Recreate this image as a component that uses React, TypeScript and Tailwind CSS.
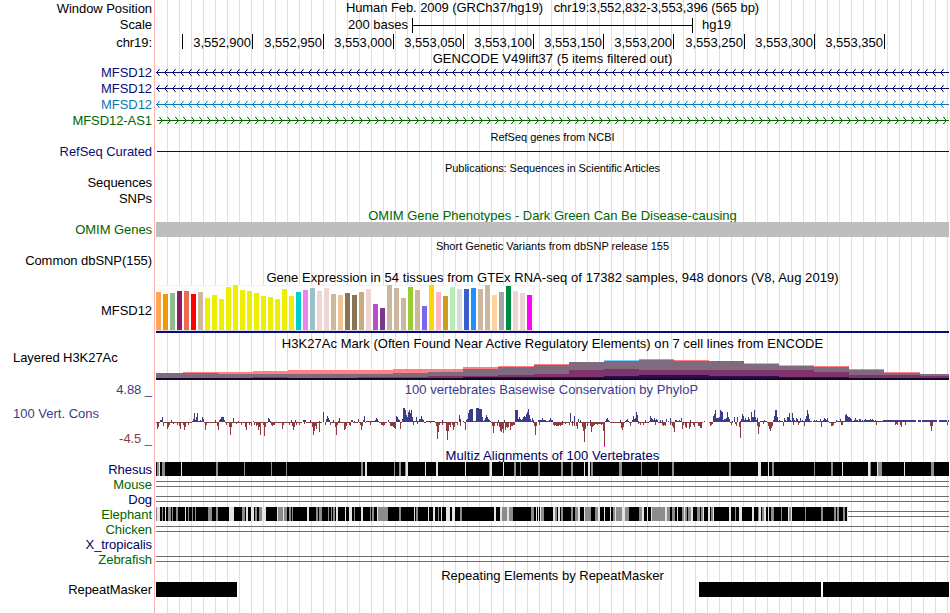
import React from "react";

const TRACK_START = 156;
const TRACK_WIDTH = 793;

type Span = [start: number, end: number];

interface RowProps {
  label?: React.ReactNode;
  labelClass?: string;
  className: string;
  children?: React.ReactNode;
}

function Row({ label, labelClass = "text-black justify-end items-center pr-0.5", className, children }: RowProps) {
  return (
    <div className={`flex ${className}`}>
      <div className={`flex w-[155px] shrink-0 border-r border-[#ffb4b4] whitespace-pre tracking-[-0.06px] ${labelClass}`}>
        {label}
      </div>
      <div className="ml-px w-[793px] shrink-0 bg-[repeating-linear-gradient(90deg,transparent_0px,transparent_11px,#dcdcf8_11px,#dcdcf8_12px)]">
        {children}
      </div>
    </div>
  );
}

function Title({ children, className = "" }: { children: React.ReactNode; className?: string }) {
  return <div className={`flex h-full items-center justify-center whitespace-pre ${className}`}>{children}</div>;
}

// Everything drawn inside a track uses genome-image x coordinates
function TrackSvg({ height, children }: { height: number; children: React.ReactNode }) {
  return (
    <svg
      className="block"
      width={TRACK_WIDTH}
      height={height}
      viewBox={`${TRACK_START} 0 ${TRACK_WIDTH} ${height}`}
      shapeRendering="crispEdges"
    >
      {children}
    </svg>
  );
}

function GeneLine({ color, strand }: { color: string; strand: "+" | "-" }) {
  const arrows: React.ReactNode[] = [];
  for (let x = 156; x < 949; x += 8) {
    const cols = strand === "-" ? [x, x + 1, x + 2, x + 3] : [x + 6, x + 5, x + 4, x + 3];
    arrows.push(
      <g key={x} fill={color}>
        <rect x={cols[0]} y={8} width={1} height={1} />
        <rect x={cols[1]} y={7} width={1} height={3} />
        <rect x={cols[2]} y={6} width={1} height={1} />
        <rect x={cols[2]} y={10} width={1} height={1} />
        <rect x={cols[3]} y={5} width={1} height={1} fillOpacity={0.7} />
        <rect x={cols[3]} y={11} width={1} height={1} fillOpacity={0.7} />
        <rect x={cols[2]} y={5} width={1} height={1} fillOpacity={0.35} />
        <rect x={cols[2]} y={11} width={1} height={1} fillOpacity={0.35} />
      </g>
    );
  }
  return (
    <TrackSvg height={16}>
      <rect x={157} y={8} width={792} height={1} fill={color} />
      {arrows}
    </TrackSvg>
  );
}

const GENES: { name: string; color: string; labelClass: string; strand: "+" | "-" }[] = [
  { name: "MFSD12", color: "#0c0c78", labelClass: "text-[#0c0c78] justify-end items-center pt-0.5 pr-0.5", strand: "-" },
  { name: "MFSD12", color: "#0c0c78", labelClass: "text-[#0c0c78] justify-end items-center pt-0.5 pr-0.5", strand: "-" },
  { name: "MFSD12", color: "#0c78b4", labelClass: "text-[#0c78b4] justify-end items-center pt-0.5 pr-0.5", strand: "-" },
  { name: "MFSD12-AS1", color: "#006400", labelClass: "text-[#006400] justify-end items-center pt-0.5 pr-0.5", strand: "+" },
];

const TICKS: [string, string][] = [
  ["", "w-[27px]"],
  ["3,552,900", "w-[70px]"],
  ["3,552,950", "w-[71px]"],
  ["3,553,000", "w-[70px]"],
  ["3,553,050", "w-[70px]"],
  ["3,553,100", "w-[70px]"],
  ["3,553,150", "w-[70px]"],
  ["3,553,200", "w-[70px]"],
  ["3,553,250", "w-[71px]"],
  ["3,553,300", "w-[70px]"],
  ["3,553,350", "w-[70px]"],
];

const GTEX_HEIGHTS = [
  38, 36, 37, 39, 39, 36, 38, 32, 35, 31, 43, 45, 40, 39, 37, 34, 33, 31, 41, 34, 38, 40, 42, 39, 42, 36, 35,
  37, 35, 38, 41, 26, 22, 45, 42, 32, 43, 40, 24, 45, 38, 34, 43, 41, 41, 42, 41, 45, 35, 38, 44, 39, 37, 35,
];

const GTEX_COLORS = [
  "#ffa54f", "#ee9a00", "#8fbc8f", "#8b1c62", "#ee6a50", "#ff0000", "#cdb79e",
  "#eeee00", "#eeee00", "#eeee00", "#eeee00", "#eeee00", "#eeee00", "#eeee00",
  "#eeee00", "#eeee00", "#eeee00", "#eeee00", "#eeee00", "#eeee00",
  "#00cdcd", "#ee82ee", "#9ac0cd", "#eed5d2", "#eed5d2", "#cdb79e", "#eec591",
  "#8b7355", "#8b7355", "#cdaa7d", "#eed5d2", "#b452cd", "#7a378b", "#cdb79e",
  "#cdb79e", "#cdb79e", "#9acd32", "#cdb79e", "#7a67ee", "#ffd700", "#ffb6c1",
  "#cd9b1d", "#b4eeb4", "#d9d9d9", "#3a5fcd", "#1e90ff", "#cdb79e", "#cdb79e",
  "#ffd39b", "#a6a6a6", "#008b45", "#eed5d2", "#eed5d2", "#ff00ff",
];

// start x, outer top, outer color, gray top, plum top, navy top (y measured in the image)
const H3K27AC: [number, number, string, number, number, number][] = [
  [156, 373, "#ff8080", 373, 378, 379],
  [183, 372, "#ff8080", 373, 378, 379],
  [218, 372, "#ff8080", 374, 378, 379],
  [253, 371, "#ff8080", 374, 377, 378],
  [288, 370, "#ff8080", 374, 378, 379],
  [358, 370, "#ff8080", 374, 377, 378],
  [393, 369, "#ff8080", 373, 377, 378],
  [428, 369, "#ff8080", 372, 376, 378],
  [463, 367, "#ff8080", 369, 376, 377],
  [498, 366, "#ff8080", 367, 375, 377],
  [534, 364, "#ff8080", 365, 374, 377],
  [569, 362, "#ff8080", 362, 370, 377],
  [604, 360, "#80ccff", 361, 369, 376],
  [639, 359, "#ff8080", 360, 370, 375],
  [674, 360, "#ff8080", 361, 370, 375],
  [709, 361, "#ff8080", 361, 370, 376],
  [744, 363, "#80ccff", 364, 370, 376],
  [779, 365, "#80ccff", 366, 370, 377],
  [814, 366, "#ff8080", 367, 372, 377],
  [849, 369, "#ff8080", 370, 375, 378],
  [884, 372, "#ff8080", 373, 375, 378],
  [920, 374, "#ff8080", 374, 376, 378],
  [949, 0, "", 0, 0, 0],
];

// PhyloP peaks as x:height
const PEAKS_UP =
  "160:2 161:2 162:5 171:2 193:3 194:9 195:2 196:5 197:9 198:1 200:2 202:5 203:3 215:2 219:2 220:3 221:5 222:5 223:5 224:2 " +
  "233:4 238:1 253:1 268:4 269:3 270:1 291:2 295:2 303:2 304:2 305:2 310:2 319:1 323:10 326:3 327:6 328:4 329:2 333:2 338:1 339:4 " +
  "351:2 352:2 354:1 358:3 363:2 364:6 367:1 368:1 372:1 373:1 374:1 375:2 376:4 377:3 378:1 388:2 396:6 397:5 398:3 399:2 " +
  "402:3 403:14 404:14 405:12 406:7 407:5 408:10 409:12 410:9 411:12 412:5 414:1 416:5 419:3 420:3 421:6 422:3 423:2 431:1 434:1 442:2 " +
  "459:7 460:3 463:1 466:2 467:3 468:9 469:12 470:13 471:13 472:13 476:14 477:14 478:14 479:13 480:13 481:13 482:5 484:2 485:4 486:7 487:5 488:3 489:2 " +
  "498:2 504:2 515:12 516:12 517:12 518:3 519:5 520:3 521:2 522:3 523:5 524:6 525:5 526:8 527:10 528:13 529:7 530:3 532:4 533:2 538:2 " +
  "539:2 540:2 541:2 542:4 543:2 544:2 545:2 547:1 549:2 550:4 551:2 552:2 562:1 570:9 572:1 574:6 578:3 580:2 590:2 606:3 607:4 608:2 " +
  "620:2 626:2 627:3 628:1 632:2 633:6 634:3 635:4 636:10 637:7 638:1 645:2 650:6 651:4 652:3 653:2 654:4 655:2 656:3 657:2 660:2 662:2 " +
  "666:3 668:1 670:4 675:2 676:2 679:2 681:4 704:1 713:6 714:8 715:12 716:4 717:4 718:4 719:5 720:12 721:11 722:10 723:2 724:3 725:3 726:4 727:10 " +
  "728:5 729:3 732:1 734:5 737:5 740:1 741:3 742:8 743:6 744:2 745:4 746:2 747:2 748:5 749:3 751:10 752:5 753:5 754:12 755:5 756:2 757:4 " +
  "763:1 764:2 765:1 773:2 774:6 775:12 776:12 777:5 779:2 781:1 784:4 785:2 787:5 788:5 789:9 790:2 792:9 793:4 794:2 796:4 797:3 800:4 802:2 " +
  "805:3 806:6 807:12 808:8 809:3 811:1 814:2 816:2 820:3 823:2 824:4 825:3 826:2 827:4 828:1 836:2 840:3 842:1 845:7 846:8 847:6 848:5 849:5 850:4 851:3 " +
  "853:1 855:4 856:2 859:3 860:3 862:2 864:2 865:3 866:2 869:2 870:3 872:3 873:2 875:2 878:1 880:1";

const PEAKS_DOWN =
  "157:7 158:5 163:4 167:7 168:5 169:3 173:2 177:3 179:4 180:7 183:3 184:8 185:5 188:3 205:8 206:3 217:4 218:8 226:3 229:5 230:13 231:5 " +
  "236:2 241:3 245:5 246:8 249:3 251:4 254:3 256:4 257:3 258:8 259:5 260:13 263:3 264:14 265:5 271:3 272:4 273:3 274:3 282:7 283:3 289:3 292:4 " +
  "293:8 294:5 296:3 299:3 304:2 312:5 313:13 314:9 315:4 316:7 319:10 325:3 330:3 335:5 336:13 337:3 344:8 345:7 346:4 349:3 350:4 " +
  "360:3 361:8 362:4 370:3 381:3 382:3 383:4 384:3 390:4 391:4 392:4 393:5 394:6 395:7 400:7 413:3 417:2 430:1 436:4 437:17 438:10 439:3 442:3 " +
  "446:9 447:18 448:9 449:3 450:5 452:3 453:8 454:5 457:3 460:4 465:8 492:4 493:11 494:4 497:4 499:5 500:9 501:10 502:7 503:11 505:8 506:5 " +
  "507:6 508:5 510:8 511:4 512:4 513:3 514:3 534:4 535:13 536:4 539:3 553:3 554:4 555:3 556:4 557:4 558:4 559:3 560:4 561:3 562:3 565:2 569:3 " +
  "572:4 574:4 576:4 577:7 582:5 583:9 584:20 585:7 587:4 590:4 591:10 592:5 593:4 594:3 595:2 596:2 597:3 598:2 599:2 600:2 601:3 602:2 603:9 604:23 " +
  "621:6 622:8 623:5 630:4 638:2 640:3 643:3 655:3 662:3 663:4 664:3 665:4 670:3 672:4 673:6 674:10 682:7 683:3 685:5 686:6 689:7 690:5 " +
  "693:3 694:5 698:4 699:4 700:6 701:6 710:4 711:3 712:2 731:3 735:2 736:4 739:5 740:16 757:4 758:12 759:5 763:2 768:4 769:7 770:9 771:6 772:4 " +
  "783:4 793:3 798:3 799:1 804:4 821:5 831:4 832:4 833:3 841:3 842:3 876:3 895:3 896:2 897:3 900:3 901:5 905:3 930:4 931:9 932:4 947:3";

// parts of the zero line with their own sign
const BASE_DOWN: Span[] = [
  [156, 160], [163, 192], [204, 218], [225, 252], [254, 268], [270, 302], [306, 322], [330, 351], [353, 358],
  [359, 363], [365, 366], [379, 387], [389, 396], [400, 402], [424, 426], [435, 458], [464, 466], [491, 515],
  [533, 537], [553, 569], [571, 574], [579, 605], [610, 625], [629, 632], [639, 649], [658, 666], [671, 675], [682, 703],
  [709, 713], [730, 733], [767, 773], [829, 836],
];
const BASE_UP: Span[] = [
  [192, 204], [366, 379], [402, 424], [426, 435], [466, 491], [515, 532], [538, 553], [605, 610], [625, 629],
  [649, 658], [676, 682], [713, 730], [740, 757], [760, 767], [773, 783], [784, 812], [813, 829], [836, 883],
];
const BASE_UP_THICK: Span[] = [
  [883, 916], [918, 921], [922, 937], [939, 947], [948, 949], [854, 858], [867, 874], [690, 691], [823, 828],
];

function parsePeaks(text: string) {
  return text.split(" ").map((part) => part.split(":").map(Number));
}

function PhyloP() {
  return (
    <TrackSvg height={51}>
      {BASE_DOWN.map(([a, b]) => (
        <rect key={`d${a}`} x={a} y={25} width={b - a} height={1} fill="#8c3c3c" />
      ))}
      {BASE_UP.map(([a, b]) => (
        <rect key={`u${a}`} x={a} y={24} width={b - a} height={1} fill="#3c3c8c" />
      ))}
      {BASE_UP_THICK.map(([a, b]) => (
        <rect key={`t${a}`} x={a} y={23} width={b - a} height={2} fill="#3c3c8c" />
      ))}
      {parsePeaks(PEAKS_UP).map(([x, h]) => (
        <rect key={`pu${x}`} x={x} y={25 - h} width={1} height={h} fill="#3c3c8c" />
      ))}
      {parsePeaks(PEAKS_DOWN).map(([x, h]) => (
        <rect key={`pd${x}`} x={x} y={25} width={1} height={h} fill="#8c3c3c" />
      ))}
      <rect x={604} y={48} width={1} height={2} fill="#ff00ff" />
    </TrackSvg>
  );
}

const RHESUS_GRAY =
  "157-158 162-164 216-217 244 271 286 361-362 394 399-400 405 489 514-515 520 538-539 561-562 571-572 591-592 619-621 641 658 " +
  "672-673 729-730 772-773 814 831-832 870 878-881 931-933";
const RHESUS_LIGHT =
  "159 181 365-366 406-407 425 436-437 465 490-491 503 584 588-589 758-760 768 842 868-869 877 904";

const ELEPHANT_GRAY =
  "156 162 168-170 172 176-177 188 192 195 208-211 216-217 242-244 255-256 259-261 278-282 284-286 289-290 292 316-317 319-321 " +
  "328 331 333-334 354 370 372-373 378-387 399-400 416-417 438 460-461 502-506 509-512 531-533 541-543 555-556 561-562 571-572 " +
  "575-577 585-590 595-597 613-614 616-621 625-628 639-641 652-664 667-669 672-674 682-683 685-686 688-690 697-699 701-702 " +
  "711-712 735 758 762-763 771-773 781 789-790 805 821-822 834-835 837-838 843-844";
const ELEPHANT_LIGHT =
  "157-159 165 185 229-233 246-247 251-253 262-265 277 283 307-308 336-337 345 349-351 361-362 377 414 428 433-434 441 446-449 " +
  "452-454 494-495 500-501 507-508 536 538 540 553-554 558-559 578-579 584 598-599 604 610 615 622-624 642-643 647 651 665-666 " +
  "677 684 691-692 703 708-709 713 729-730 739-741 752-753 759-760 764-765 768 788 791 847";

function stripes(text: string, fill: string) {
  return text.split(" ").map((part) => {
    const [a, b = a] = part.split("-").map(Number);
    return <rect key={part} x={a} y={0} width={b - a + 1} height={14} fill={fill} />;
  });
}

function Gaps({ from = 156 }: { from?: number }) {
  return (
    <>
      <rect x={from} y={4} width={949 - from} height={1} fill="#6e6e6e" />
      <rect x={from} y={9} width={949 - from} height={1} fill="#6e6e6e" />
    </>
  );
}

const LOWER_LABEL = "text-black justify-end items-center pt-0.5 pr-0.5";
const NAVY_LABEL = "text-[#000064] justify-end items-center pr-0.5";
const GREEN_LABEL = "text-[#006400] justify-end items-center pr-0.5";

export default function App() {
  return (
    <div className="h-[613px] w-[950px] overflow-hidden bg-white font-['Liberation_Sans',Arial,sans-serif] text-[13px] leading-4 text-black">
      <Row className="h-4" label="Window Position" labelClass={LOWER_LABEL}>
        <Title className="pb-px tracking-[-0.08px]">{"Human Feb. 2009 (GRCh37/hg19)   chr19:3,552,832-3,553,396 (565 bp)"}</Title>
      </Row>
      <Row className="h-[17px]" label="Scale">
        <div className="flex h-full items-center pt-px">
          <div className="w-[252px] text-right">200 bases</div>
          <div className="ml-1 flex h-[15px] w-[281px] items-center border-x border-black">
            <div className="h-px w-full bg-black" />
          </div>
          <div className="ml-[9px]">hg19</div>
        </div>
      </Row>
      <Row className="h-[18px]" label="chr19:" labelClass={LOWER_LABEL}>
        <div className="flex pt-px">
          {TICKS.map(([text, width]) => (
            <div key={width + text} className={`h-[15px] border-r border-black pr-px text-right leading-[18px] ${width}`}>
              {text}
            </div>
          ))}
        </div>
      </Row>
      <Row className="h-[13px]">
        <Title className="pt-0.5 tracking-[0.03px]">GENCODE V49lift37 (5 items filtered out)</Title>
      </Row>
      {GENES.map((gene, i) => (
        <Row key={i} className="h-4" label={gene.name} labelClass={gene.labelClass}>
          <GeneLine color={gene.color} strand={gene.strand} />
        </Row>
      ))}
      <Row className="h-4">
        <Title className="pt-0.5 text-[11px]">RefSeq genes from NCBI</Title>
      </Row>
      <Row className="h-4" label="RefSeq Curated" labelClass="text-[#0c0c78] justify-end items-center pr-0.5">
        <TrackSvg height={16}>
          <rect x={157} y={7} width={792} height={1} fill="#0c0c50" />
        </TrackSvg>
      </Row>
      <Row className="h-[15px]">
        <Title className="text-[11px] tracking-[-0.06px]">Publications: Sequences in Scientific Articles</Title>
      </Row>
      <Row className="h-4" label="Sequences" />
      <Row className="h-4" label="SNPs" />
      <Row className="h-[15px]">
        <Title className="pt-0.5 text-[#006400]">OMIM Gene Phenotypes - Dark Green Can Be Disease-causing</Title>
      </Row>
      <Row className="h-[15px]" label="OMIM Genes" labelClass={GREEN_LABEL}>
        <div className="h-[15px] bg-[#bebebe]" />
      </Row>
      <Row className="h-[15px]">
        <Title className="pt-0.5 text-[11px]">Short Genetic Variants from dbSNP release 155</Title>
      </Row>
      <Row className="h-[17px]" label="Common dbSNP(155)" />
      <Row className="h-4">
        <Title className="pt-0.5 tracking-[0.055px]">Gene Expression in 54 tissues from GTEx RNA-seq of 17382 samples, 948 donors (V8, Aug 2019)</Title>
      </Row>
      <Row className="h-[49px]" label="MFSD12" labelClass={LOWER_LABEL}>
        <TrackSvg height={49}>
          <rect x={156} y={0} width={378} height={46} fill="#f2f2f2" />
          <rect x={156} y={1} width={377} height={44} fill="#ffffff" />
          <rect x={156} y={45} width={378} height={1} fill="#dcdcdc" />
          {GTEX_HEIGHTS.map((h, i) => (
            <rect key={i} x={156 + i * 7} y={45 - h} width={5} height={h} fill={GTEX_COLORS[i]} />
          ))}
          <rect x={156} y={46} width={793} height={2} fill="#0c0c78" />
        </TrackSvg>
      </Row>
      <Row className="h-[17px]">
        <Title className="pt-[3px] tracking-[0.045px]">H3K27Ac Mark (Often Found Near Active Regulatory Elements) on 7 cell lines from ENCODE</Title>
      </Row>
      <Row className="h-[31px]" label={<span className="-mt-px">Layered H3K27Ac</span>} labelClass="text-black items-start pl-[13px]">
        <TrackSvg height={31}>
          {H3K27AC.slice(0, -1).map(([x, outer, color, gray, plum, navy], i) => {
            const w = H3K27AC[i + 1][0] - x;
            return (
              <g key={x}>
                <rect x={x} y={outer - 351} width={w} height={380 - outer} fill={color} />
                <rect x={x} y={gray - 351} width={w} height={380 - gray} fill="#806a80" />
                <rect x={x} y={plum - 351} width={w} height={380 - plum} fill="#80336a" />
                <rect x={x} y={navy - 351} width={w} height={380 - navy} fill="#2a0a5a" />
              </g>
            );
          })}
          <rect x={156} y={27} width={793} height={2} fill="#140a28" />
        </TrackSvg>
      </Row>
      <Row className="h-[15px]" label="4.88 _" labelClass="text-[#3c3c8c] justify-end items-center pr-0.5">
        <Title className="pt-px pr-0.5 tracking-[0.03px] text-[#3c3c8c]">100 vertebrates Basewise Conservation by PhyloP</Title>
      </Row>
      <Row
        className="h-[51px]"
        labelClass="flex-col justify-between pt-[9px] pb-px"
        label={
          <>
            <div className="pl-[13px] tracking-normal text-[#3c3c8c]">100 Vert. Cons</div>
            <div className="pr-0.5 text-right text-[#8c3c3c]">-4.5 _</div>
          </>
        }
      >
        <PhyloP />
      </Row>
      <Row className="h-[14px]">
        <Title className="pt-0.5 tracking-[0.08px] text-[#000064]">Multiz Alignments of 100 Vertebrates</Title>
      </Row>
      <Row className="h-[15px]" label="Rhesus" labelClass={NAVY_LABEL}>
        <TrackSvg height={15}>
          <rect x={156} y={0} width={793} height={14} fill="#000000" />
          {stripes(RHESUS_GRAY, "#8c8c8c")}
          {stripes(RHESUS_LIGHT, "#e4e4e4")}
        </TrackSvg>
      </Row>
      <Row className="h-[15px]" label="Mouse" labelClass={GREEN_LABEL}>
        <TrackSvg height={15}>
          <Gaps />
        </TrackSvg>
      </Row>
      <Row className="h-[15px]" label="Dog" labelClass={NAVY_LABEL}>
        <TrackSvg height={15}>
          <Gaps />
        </TrackSvg>
      </Row>
      <Row className="h-[15px]" label="Elephant" labelClass={GREEN_LABEL}>
        <TrackSvg height={15}>
          <rect x={156} y={0} width={692} height={14} fill="#000000" />
          {stripes(ELEPHANT_GRAY, "#8c8c8c")}
          {stripes(ELEPHANT_LIGHT, "#e4e4e4")}
          <Gaps from={848} />
        </TrackSvg>
      </Row>
      <Row className="h-[15px]" label="Chicken" labelClass={GREEN_LABEL}>
        <TrackSvg height={15}>
          <Gaps />
        </TrackSvg>
      </Row>
      <Row className="h-[15px]" label="X_tropicalis" labelClass={NAVY_LABEL} />
      <Row className="h-[15px]" label="Zebrafish" labelClass={GREEN_LABEL}>
        <TrackSvg height={15}>
          <Gaps />
        </TrackSvg>
      </Row>
      <Row className="h-[15px]">
        <Title className="pt-0.5">Repeating Elements by RepeatMasker</Title>
      </Row>
      <Row className="h-[15px]" label="RepeatMasker">
        <TrackSvg height={15}>
          <rect x={156} y={0} width={81} height={15} />
          <rect x={699} y={0} width={122} height={15} />
          <rect x={823} y={0} width={126} height={15} />
        </TrackSvg>
      </Row>
      <Row className="h-4" />
    </div>
  );
}
